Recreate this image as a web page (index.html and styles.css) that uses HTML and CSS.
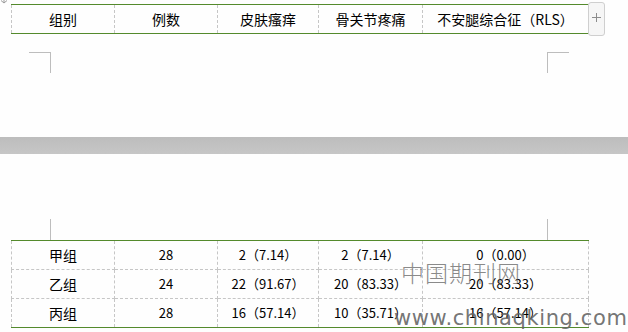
FILE: index.html
```html
<!DOCTYPE html>
<html lang="zh">
<head>
<meta charset="utf-8">
<title>表格</title>
<link rel="stylesheet" href="styles.css">
</head>
<body>
<div class="page page-top">
  <svg class="handle" width="8" height="4" viewBox="0 0 8 4"><path d="M1 0.5 L4 3 L7 0.5" fill="none" stroke="#9a9a9a" stroke-width="1"/><path d="M4 0 V3" stroke="#9a9a9a" stroke-width="1"/></svg>
  <div class="table-row">
    <table class="grid">
      <colgroup><col class="c1"><col class="c2"><col class="c3"><col class="c4"><col class="c5"></colgroup>
      <tr class="head">
        <td>组别</td><td>例数</td><td>皮肤瘙痒</td><td>骨关节疼痛</td><td>不安腿综合征（RLS）</td>
      </tr>
    </table>
    <div class="add"><svg width="9" height="9" viewBox="0 0 9 9"><path d="M4.5 0 V9 M0 4.5 H9" stroke="#8c8c8c" stroke-width="1"/></svg></div>
  </div>
  <div class="marks marks-top"><span class="mark tl"></span><span class="mark tr"></span></div>
</div>
<div class="gap"></div>
<div class="page page-bottom">
  <div class="marks marks-bottom"><span class="mark bl"></span><span class="mark br"></span></div>
  <table class="grid">
    <colgroup><col class="c1"><col class="c2"><col class="c3"><col class="c4"><col class="c5"></colgroup>
    <tr><td>甲组</td><td class="n">28</td><td class="n">2（7.14）</td><td class="n">2（7.14）</td><td class="n">0（0.00）</td></tr>
    <tr><td>乙组</td><td class="n">24</td><td class="n">22（91.67）</td><td class="n">20（83.33）</td><td class="n">20（83.33）</td></tr>
    <tr><td>丙组</td><td class="n">28</td><td class="n">16（57.14）</td><td class="n">10（35.71）</td><td class="n">16（57.14）</td></tr>
  </table>
  <div class="wm-cn">中国期刊网</div>
  <div class="wm-url">www.chinaqking.com</div>
</div>
</body>
</html>
```
FILE: styles.css
```css
html, body {
  margin: 0;
  padding: 0;
  background: #fefefe;
}
body {
  width: 628px;
  height: 332px;
  overflow: hidden;
  font-family: "Noto Sans CJK SC", "Liberation Sans", sans-serif;
  color: #111;
}
.page {
  position: relative;
}
.page-top {
  height: 137px;
}
.handle {
  position: absolute;
  left: 0;
  top: 0;
}
.table-row {
  display: flex;
  align-items: flex-start;
  padding: 2px 0 0 11px;
}
.grid {
  border-collapse: collapse;
  table-layout: fixed;
  width: 577px;
  border-top: 1px solid #548a2c;
  border-bottom: 1px solid #548a2c;
}
.table-row .grid {
  margin-top: 2px;
}
.c1 { width: 103px; }
.c2 { width: 103px; }
.c3 { width: 101px; }
.c4 { width: 104px; }
.c5 { width: 166px; }
.grid td {
  border: 1px dashed #c6c6c6;
  height: 28px;
  padding: 0;
  text-align: center;
  vertical-align: middle;
  font-size: 14px;
  line-height: 16px;
  color: #000;
}
.grid tr:first-child td {
  border-top: 1px solid #548a2c;
}
.grid tr:last-child td {
  border-bottom: 1px solid #548a2c;
}
.grid td.n {
  font-size: 13px;
}
.add {
  width: 15px;
  height: 30px;
  margin-left: -1px;
  margin-top: 0;
  border: 1px solid #cfcfcf;
  border-radius: 3px;
  background: #f6f6f6;
  display: flex;
  align-items: center;
  justify-content: center;
  padding-bottom: 2px;
  box-sizing: content-box;
}
.add svg { margin-bottom: 2px; }
.marks {
  display: flex;
  justify-content: space-between;
  margin-left: 29px;
  margin-right: 59px;
}
.marks-top {
  margin-top: 16px;
}
.mark {
  display: block;
  width: 21px;
  height: 20px;
}
.tl {
  border-top: 1px solid #bdbdbd;
  border-right: 1px solid #bdbdbd;
}
.tr {
  border-top: 1px solid #bdbdbd;
  border-left: 1px solid #bdbdbd;
}
.gap {
  height: 17px;
  background: linear-gradient(#bdbdbd, #c6c6c6);
}
.page-bottom {
  height: 178px;
  padding-top: 65px;
  box-sizing: border-box;
}
.bl {
  height: 21px;
  border-right: 1px solid #bdbdbd;
}
.br {
  height: 21px;
  border-left: 1px solid #bdbdbd;
}
.page-bottom .grid {
  margin-left: 11px;
}
.wm-cn {
  position: absolute;
  left: 401px;
  top: 104px;
  font-family: "Noto Sans CJK SC", sans-serif;
  font-weight: 300;
  font-size: 23px;
  line-height: 28px;
  letter-spacing: 1px;
  color: rgba(100, 100, 100, 0.75);
}
.wm-url {
  position: absolute;
  left: 394px;
  top: 154px;
  font-family: "DejaVu Sans", sans-serif;
  font-size: 21px;
  line-height: 21px;
  letter-spacing: 0.6px;
  color: rgba(100, 100, 100, 0.9);
  white-space: nowrap;
}
```
